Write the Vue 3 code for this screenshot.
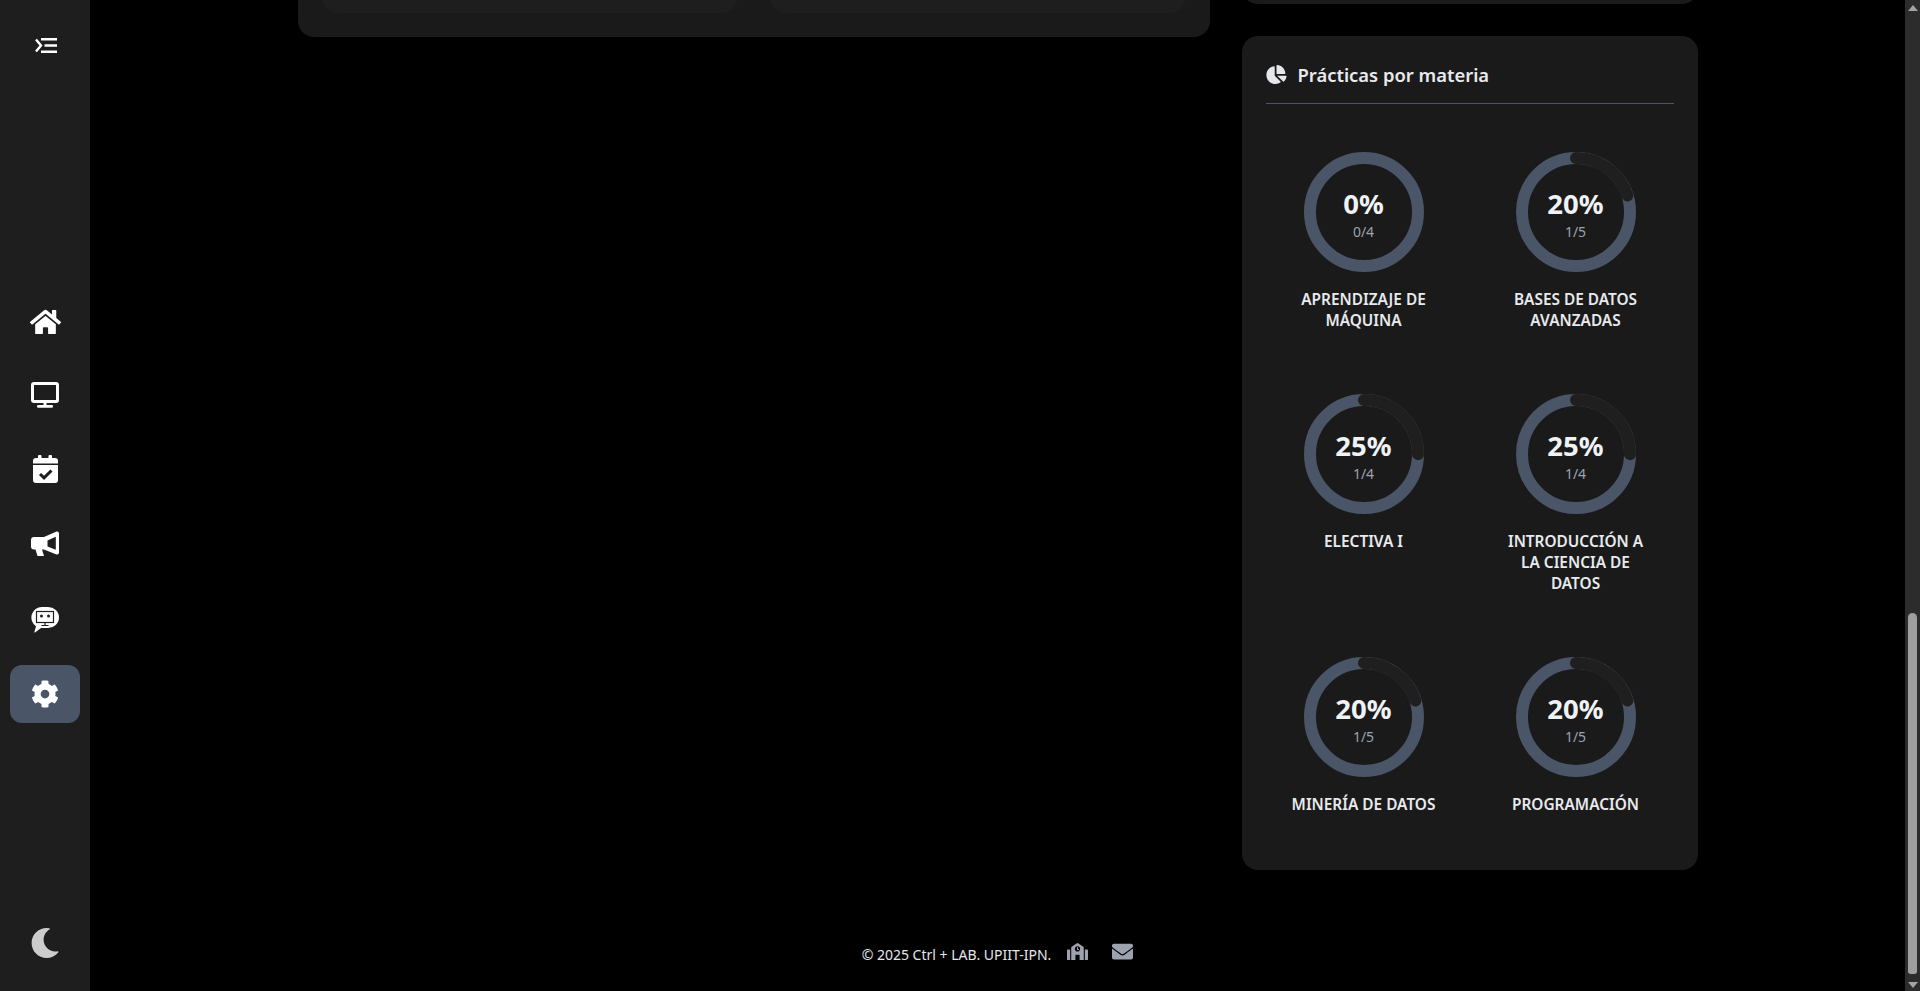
<script setup>
const materias = [
  { name: 'APRENDIZAJE DE MÁQUINA', done: 0, total: 4 },
  { name: 'BASES DE DATOS AVANZADAS', done: 1, total: 5 },
  { name: 'ELECTIVA I', done: 1, total: 4 },
  { name: 'INTRODUCCIÓN A LA CIENCIA DE DATOS', done: 1, total: 4 },
  { name: 'MINERÍA DE DATOS', done: 1, total: 5 },
  { name: 'PROGRAMACIÓN', done: 1, total: 5 },
]

const radius = 54
const circumference = 2 * Math.PI * radius

function percent(m) {
  return Math.round((m.done / m.total) * 100)
}

function dash(m) {
  const len = (m.done / m.total) * circumference
  return len + ' ' + (circumference - len)
}
</script>

<template>
  <div class="page">
    <aside class="sidebar">
      <button class="toggle">
        <svg width="22" height="15" viewBox="0 0 22 15" fill="none" stroke="#fff" stroke-width="2.4">
          <path d="M1 1.5 6 7.5 1 13.500" />
          <path d="M6 1.200H22M9.500 7.500H22M6 13.800H22" />
        </svg>
      </button>

      <nav class="nav">
        <a class="nav-item">
          <svg width="31" height="28" viewBox="0 0 576 512" fill="#fff">
            <path d="M280.37 148.26L96 300.11V464a16 16 0 0 0 16 16l112.06-.29a16 16 0 0 0 15.92-16V368a16 16 0 0 1 16-16h64a16 16 0 0 1 16 16v95.64a16 16 0 0 0 16 16.05L464 480a16 16 0 0 0 16-16V300L295.67 148.26a12.19 12.19 0 0 0-15.3 0zM571.6 251.47L488 182.56V44.05a12 12 0 0 0-12-12h-56a12 12 0 0 0-12 12v72.61L318.47 43a48 48 0 0 0-61 0L4.34 251.47a12 12 0 0 0-1.6 16.9l25.5 31A12 12 0 0 0 45.15 301l235.22-193.74a12.19 12.19 0 0 1 15.3 0L530.9 301a12 12 0 0 0 16.9-1.6l25.5-31a12 12 0 0 0-1.7-16.93z" />
          </svg>
        </a>
        <a class="nav-item nudge">
          <svg width="28" height="26" viewBox="0 0 28 26">
            <rect x="1.500" y="1.500" width="25" height="18" rx="1.500" fill="none" stroke="#fff" stroke-width="3" />
            <rect x="12.500" y="20" width="3" height="3.500" fill="#fff" />
            <rect x="6" y="23" width="16" height="2.800" rx="1.300" fill="#fff" />
          </svg>
        </a>
        <a class="nav-item nudge">
          <svg width="25" height="28" viewBox="0 0 25 28" fill="#fff">
            <rect x="5" y="0" width="3.500" height="6" rx="1" />
            <rect x="15.500" y="0" width="3.500" height="6" rx="1" />
            <path d="M3 3H22A3 3 0 0 1 25 6V8.500H0V6A3 3 0 0 1 3 3Z" />
            <path d="M0 10H25V25A3 3 0 0 1 22 28H3A3 3 0 0 1 0 25Z" />
            <path d="M7 19 11 22.800 18.500 15.500" fill="none" stroke="#1e1e1e" stroke-width="3" />
          </svg>
        </a>
        <a class="nav-item nudge">
          <svg width="28" height="25" viewBox="0 0 28 25" fill="#fff">
            <path d="M3 6H13.500V18.500H11L13 25H6.500L4.500 18.500H3A3 3 0 0 1 0 15.500V9A3 3 0 0 1 3 6Z" />
            <path fill-rule="evenodd" d="M13 6 25.500 .5Q28 0 28 2.500V21.500Q28 24 25.500 23.500L13 18.500ZM16.500 9.500V15.500L24.800 18.800V5.800Z" />
          </svg>
        </a>
        <a class="nav-item">
          <svg width="28" height="26" viewBox="0 0 28 26">
            <path d="M11 0H17A11 10.500 0 0 1 17 21H10L4 25.500Q3 25.800 3.500 24.500L5 19.200A10.500 10.500 0 0 1 11 0Z" fill="#fff" />
            <rect x="5.500" y="4.500" width="17" height="11" fill="none" stroke="#1e1e1e" stroke-width="1.200" />
            <circle cx="10.500" cy="9" r="1.500" fill="#1e1e1e" />
            <circle cx="17.500" cy="9" r="1.500" fill="#1e1e1e" />
            <path d="M14 15.500V18.500M10.500 18.500H17.500" stroke="#1e1e1e" stroke-width="1.200" />
          </svg>
        </a>
        <a class="nav-item active">
          <svg width="28" height="28" viewBox="0 0 512 512" fill="#fff">
            <path d="M487.4 315.7l-42.6-24.6c4.3-23.2 4.3-47 0-70.2l42.6-24.6c4.9-2.8 7.1-8.6 5.5-14-11.1-35.6-30-67.8-54.7-94.6-3.8-4.1-10-5.1-14.8-2.3L380.8 110c-17.9-15.4-38.5-27.3-60.8-35.1V25.8c0-5.6-3.9-10.5-9.4-11.7-36.7-8.2-74.3-7.8-109.2 0-5.5 1.2-9.4 6.1-9.4 11.7V75c-22.2 7.9-42.8 19.8-60.8 35.1L88.7 85.5c-4.9-2.8-11-1.9-14.8 2.3-24.7 26.7-43.6 58.9-54.7 94.6-1.7 5.4.6 11.2 5.5 14L67.3 221c-4.3 23.2-4.3 47 0 70.2l-42.6 24.6c-4.9 2.8-7.1 8.6-5.5 14 11.1 35.6 30 67.8 54.7 94.6 3.8 4.1 10 5.1 14.8 2.3l42.6-24.6c17.9 15.4 38.5 27.3 60.8 35.1v49.2c0 5.6 3.9 10.5 9.4 11.7 36.7 8.2 74.3 7.8 109.2 0 5.5-1.2 9.4-6.1 9.4-11.7v-49.2c22.2-7.9 42.8-19.8 60.8-35.1l42.6 24.6c4.9 2.8 11 1.9 14.8-2.3 24.7-26.7 43.6-58.9 54.7-94.6 1.5-5.5-.7-11.3-5.6-14.1zM256 336c-44.1 0-80-35.9-80-80s35.9-80 80-80 80 35.9 80 80-35.9 80-80 80z" />
          </svg>
        </a>
      </nav>

      <button class="theme">
        <svg width="30" height="30" viewBox="0 0 512 512" fill="#ccc">
          <path d="M283.211 512c78.962 0 151.079-35.925 198.857-94.792 7.068-8.708-.639-21.43-11.562-19.35-124.203 23.654-238.262-71.576-238.262-196.954 0-72.222 38.662-138.635 101.498-174.394 9.686-5.512 7.25-20.197-3.756-22.23A258.156 258.156 0 0 0 283.211 0c-141.309 0-256 114.511-256 256 0 141.309 114.511 256 256 256z" />
        </svg>
      </button>
    </aside>

    <main class="main">
      <div class="content">
        <section class="left-card">
          <div class="left-inner"></div>
          <div class="left-inner"></div>
        </section>

        <div class="right-col">
          <section class="prev-card"></section>

          <section class="card">
            <h3 class="card-title">
              <svg class="pie" width="21" height="19" viewBox="0 0 544 512" fill="#e5e7eb">
                <path d="M527.79 288H290.5l158.03 158.03c6.04 6.04 15.98 6.53 22.19.68 38.7-36.46 65.32-85.61 73.13-140.86 1.34-9.46-6.51-17.85-16.06-17.85zm-15.83-64.8C503.72 103.74 408.26 8.28 288.8.04 279.68-.59 272 7.1 272 16.24V240h223.77c9.14 0 16.82-7.68 16.19-16.8zM224 288V50.71c0-9.55-8.39-17.4-17.84-16.06C86.99 51.49-4.1 155.6.14 280.37 4.5 408.51 114.83 513.59 243.03 511.98c50.4-.63 96.97-16.87 135.26-44.03 7.9-5.6 8.42-17.23 1.57-24.08L224 288z" />
              </svg>
              <span class="title-text">Prácticas por materia</span>
            </h3>

            <div class="grid">
              <div v-for="m in materias" :key="m.name" class="item">
                <div class="ring">
                  <svg width="120" height="120" viewBox="0 0 120 120" fill="none">
                    <circle cx="60" cy="60" :r="radius" stroke="#4a5568" stroke-width="12" />
                    <circle
                      v-if="m.done > 0"
                      cx="60"
                      cy="60"
                      :r="radius"
                      stroke="#1f1f1f"
                      stroke-width="12"
                      stroke-linecap="round"
                      :stroke-dasharray="dash(m)"
                      transform="rotate(-90 60 60)"
                    />
                  </svg>
                  <div class="ring-text">
                    <span class="pct">{{ percent(m) }}%</span>
                    <span class="count">{{ m.done }}/{{ m.total }}</span>
                  </div>
                </div>
                <div class="label">{{ m.name }}</div>
              </div>
            </div>
          </section>
        </div>
      </div>

      <footer class="footer">
        <span class="copy">© 2025 Ctrl + LAB. UPIIT-IPN.</span>
        <svg class="school" width="21" height="17" viewBox="0 0 640 512" fill="#9ca3af">
          <path d="M0 224v272c0 8.84 7.16 16 16 16h80V192H32c-17.67 0-32 14.33-32 32zm360-48h-24v-40c0-4.42-3.58-8-8-8h-16c-4.42 0-8 3.58-8 8v64c0 4.42 3.58 8 8 8h48c4.42 0 8-3.58 8-8v-16c0-4.42-3.58-8-8-8zm137.75-63.96l-160-106.67a32.02 32.02 0 0 0-35.5 0l-160 106.67A32.002 32.002 0 0 0 128 138.66V512h128V368c0-8.84 7.16-16 16-16h96c8.84 0 16 7.16 16 16v144h128V138.67c0-10.7-5.35-20.69-14.25-26.63zM320 256c-44.18 0-80-35.82-80-80s35.82-80 80-80 80 35.82 80 80-35.82 80-80 80zm288-64h-64v320h80c8.84 0 16-7.16 16-16V224c0-17.67-14.33-32-32-32z" />
        </svg>
        <svg class="mail" width="21" height="21" viewBox="0 0 512 512" fill="#9ca3af">
          <path d="M502.3 190.8c3.9-3.1 9.7-.2 9.7 4.7V400c0 26.5-21.5 48-48 48H48c-26.5 0-48-21.5-48-48V195.6c0-5 5.7-7.8 9.7-4.7 22.4 17.4 52.1 39.5 154.1 113.6 21.1 15.4 56.7 47.8 92.2 47.6 35.7.3 72-32.8 92.3-47.6 102-74.1 131.6-96.3 154-113.7zM256 320c23.2.4 56.6-29.2 73.4-41.4 132.7-96.3 142.8-104.7 173.4-128.7 5.8-4.5 9.2-11.5 9.2-18.9v-19c0-26.5-21.5-48-48-48H48C21.5 64 0 85.5 0 112v19c0 7.4 3.4 14.3 9.2 18.9 30.6 23.9 40.7 32.4 173.4 128.7 16.8 12.2 50.2 41.8 73.4 41.4z" />
        </svg>
      </footer>
    </main>

    <div class="scrollbar">
      <span class="arrow up"></span>
      <div class="thumb"></div>
      <span class="arrow down"></span>
    </div>
  </div>
</template>

<style scoped>
.page {
  display: flex;
  height: 991px;
  overflow: hidden;
  background: #000;
  font-family: "Noto Sans", "Open Sans", sans-serif;
  color: #e5e7eb;
}

.sidebar {
  width: 90px;
  flex-shrink: 0;
  display: flex;
  flex-direction: column;
  align-items: center;
  background: #1e1e1e;
}

.toggle,
.theme {
  display: flex;
  padding: 0;
  border: none;
  background: none;
}

.toggle {
  margin-top: 38px;
  margin-left: 2px;
}

.nav {
  display: flex;
  flex-direction: column;
  gap: 16px;
  margin-top: 240px;
}

.nav-item {
  width: 70px;
  height: 58.4px;
  display: flex;
  align-items: center;
  justify-content: center;
  border-radius: 12px;
}

.nav-item.nudge svg {
  margin-top: -4px;
}

.nav-item.active {
  background: #4a5568;
}

.theme {
  margin-top: auto;
  margin-bottom: 33px;
}

.main {
  flex: 1;
  min-width: 0;
  display: flex;
  flex-direction: column;
}

/* page is scrolled down, the top of the cards stays out of view */
.content {
  width: 1400px;
  margin: -100px auto 0;
  display: grid;
  grid-template-columns: 912px 456px;
  gap: 32px;
  align-items: start;
}

.left-card {
  height: 137px;
  display: grid;
  grid-template-columns: 1fr 1fr;
  gap: 32px;
  padding: 0 24px 24px;
  box-sizing: border-box;
  background: #1a1a1a;
  border-radius: 16px;
}

.left-inner {
  background: #1e1e1e;
  border-radius: 0 0 16px 16px;
}

.right-col {
  display: flex;
  flex-direction: column;
  gap: 32px;
}

.prev-card {
  height: 104px;
  background: #1a1a1a;
  border-radius: 16px;
}

.card {
  height: 834px;
  box-sizing: border-box;
  padding: 24px;
  background: #1a1a1a;
  border-radius: 16px;
}

.card-title {
  display: flex;
  align-items: center;
  gap: 11px;
  margin: 0;
  padding-bottom: 16px;
  border-bottom: 1px solid #4a5568;
  font-size: 18.400px;
  line-height: 27px;
  font-weight: 600;
  color: #e8eaee;
}

.pie {
  margin-top: 2px;
}

.title-text {
  position: relative;
  top: 1px;
}

.grid {
  display: grid;
  grid-template-columns: 1fr 1fr;
  column-gap: 16px;
  row-gap: 63px;
  margin-top: 48px;
}

.item {
  display: flex;
  flex-direction: column;
  align-items: center;
}

.ring {
  position: relative;
  width: 120px;
  height: 120px;
}

.ring svg {
  display: block;
}

.ring-text {
  position: absolute;
  inset: 0;
  display: flex;
  flex-direction: column;
  align-items: center;
  justify-content: center;
  padding-top: 4px;
  box-sizing: border-box;
}

.pct {
  font-size: 27.500px;
  line-height: 36px;
  font-weight: 700;
  color: #f0f2f5;
}

.count {
  font-size: 14px;
  line-height: 20px;
  color: #9ca3af;
}

.label {
  max-width: 150px;
  margin-top: 17px;
  font-size: 15.400px;
  line-height: 21px;
  font-weight: 600;
  text-align: center;
  color: #e8eaee;
}

.footer {
  position: absolute;
  top: 943px;
  left: 90px;
  width: 1815px;
  display: flex;
  align-items: center;
  justify-content: center;
  height: 20px;
  font-size: 14px;
  color: #e5e7eb;
}

.copy {
  position: relative;
  top: 1px;
}

.school {
  margin-left: 16px;
  margin-top: -3px;
}

.mail {
  margin-left: 24px;
  margin-top: -3px;
}

.scrollbar {
  width: 15px;
  flex-shrink: 0;
  display: flex;
  flex-direction: column;
  align-items: center;
  background: #2c2c2c;
}

.thumb {
  width: 9px;
  height: 361px;
  margin-top: auto;
  margin-bottom: 8px;
  background: #9f9f9f;
  border-radius: 5px 5px 3px 3px;
}

.arrow {
  width: 0;
  height: 0;
  border-left: 5px solid transparent;
  border-right: 5px solid transparent;
}

.arrow.up {
  margin-top: 5px;
  border-bottom: 6px solid #a3a3a3;
}

.arrow.down {
  margin-bottom: 3px;
  border-top: 6px solid #a3a3a3;
}
</style>

<style>
html,
body {
  margin: 0;
  background: #000;
  overflow: hidden;
}
</style>
